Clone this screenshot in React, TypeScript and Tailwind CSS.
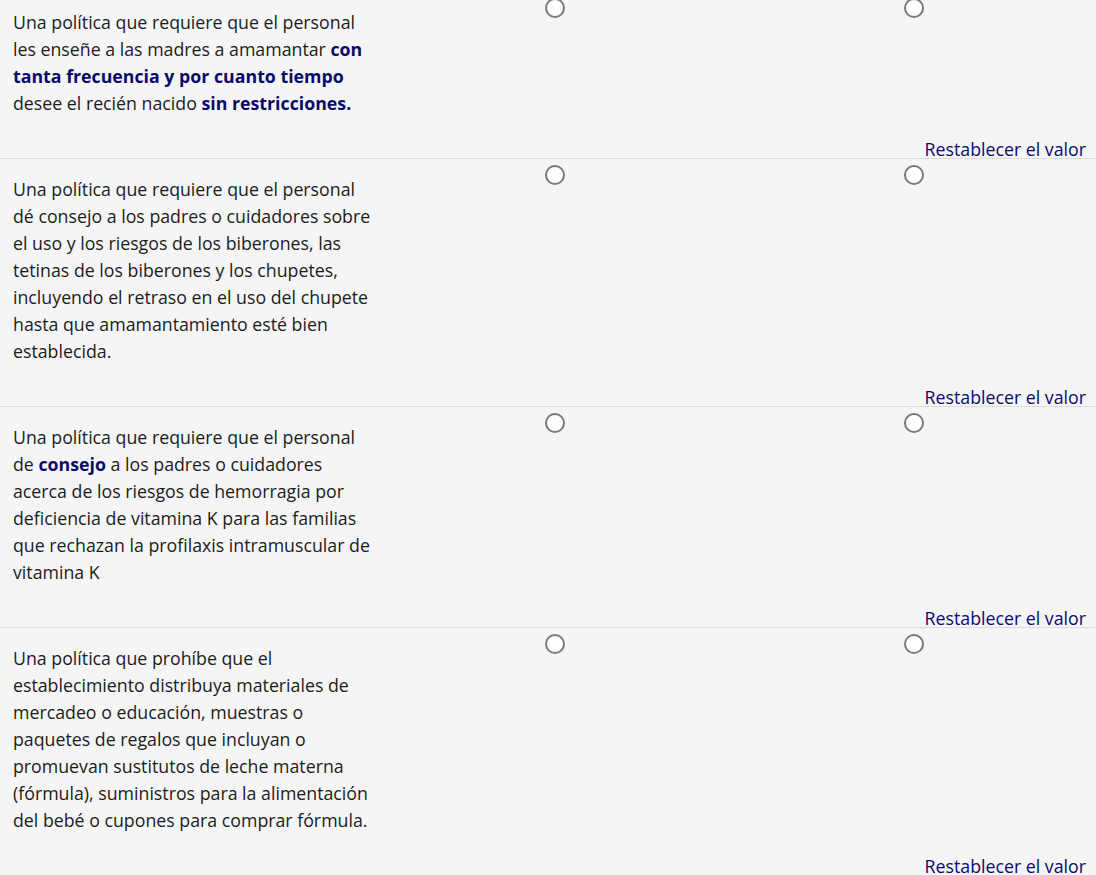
import React from "react";

type Part = { t: string; b?: boolean };

const rows: Part[][] = [
  [
    { t: "Una política que requiere que el personal les enseñe a las madres a amamantar " },
    { t: "con tanta frecuencia y por cuanto tiempo", b: true },
    { t: " desee el recién nacido " },
    { t: "sin restricciones.", b: true },
  ],
  [
    {
      t: "Una política que requiere que el personal dé consejo a los padres o cuidadores sobre el uso y los riesgos de los biberones, las tetinas de los biberones y los chupetes, incluyendo el retraso en el uso del chupete hasta que amamantamiento esté bien establecida.",
    },
  ],
  [
    { t: "Una política que requiere que el personal de " },
    { t: "consejo", b: true },
    {
      t: " a los padres o cuidadores acerca de los riesgos de hemorragia por deficiencia de vitamina K para las familias que rechazan la profilaxis intramuscular de vitamina K",
    },
  ],
  [
    {
      t: "Una política que prohíbe que el establecimiento distribuya materiales de mercadeo o educación, muestras o paquetes de regalos que incluyan o promuevan sustitutos de leche materna (fórmula), suministros para la alimentación del bebé o cupones para comprar fórmula.",
    },
  ],
];

function Radio() {
  return <span className="block w-5 h-5 rounded-full border-2 border-[#7a7a7a] bg-white" />;
}

export default function App() {
  return (
    <div className="min-h-screen bg-[#f5f5f5] overflow-hidden font-['Open_Sans',sans-serif]">
      <div className="-mt-[9px]">
        {rows.map((parts, i) => (
          <div key={i} className="border-t border-[#dcdcdc]">
            <div className="grid grid-cols-[375px_359px_359px_1fr]">
              <div className="pl-[13px] pt-[17px] pb-[24px] text-[17.75px] leading-[27px] text-[#1c1c1c]">
                {parts.map((p, j) =>
                  p.b ? (
                    <strong key={j} className="font-bold text-[#0a0a6b]">
                      {p.t}
                    </strong>
                  ) : (
                    <span key={j}>{p.t}</span>
                  )
                )}
              </div>
              <div className="flex justify-center pt-[6px]">
                <Radio />
              </div>
              <div className="flex justify-center pt-[6px]">
                <Radio />
              </div>
              <div />
            </div>
            <div className="text-right pr-[10px] pb-px text-[17.75px] leading-4 text-[#0a0a6e]">
              Restablecer el valor
            </div>
          </div>
        ))}
      </div>
    </div>
  );
}
